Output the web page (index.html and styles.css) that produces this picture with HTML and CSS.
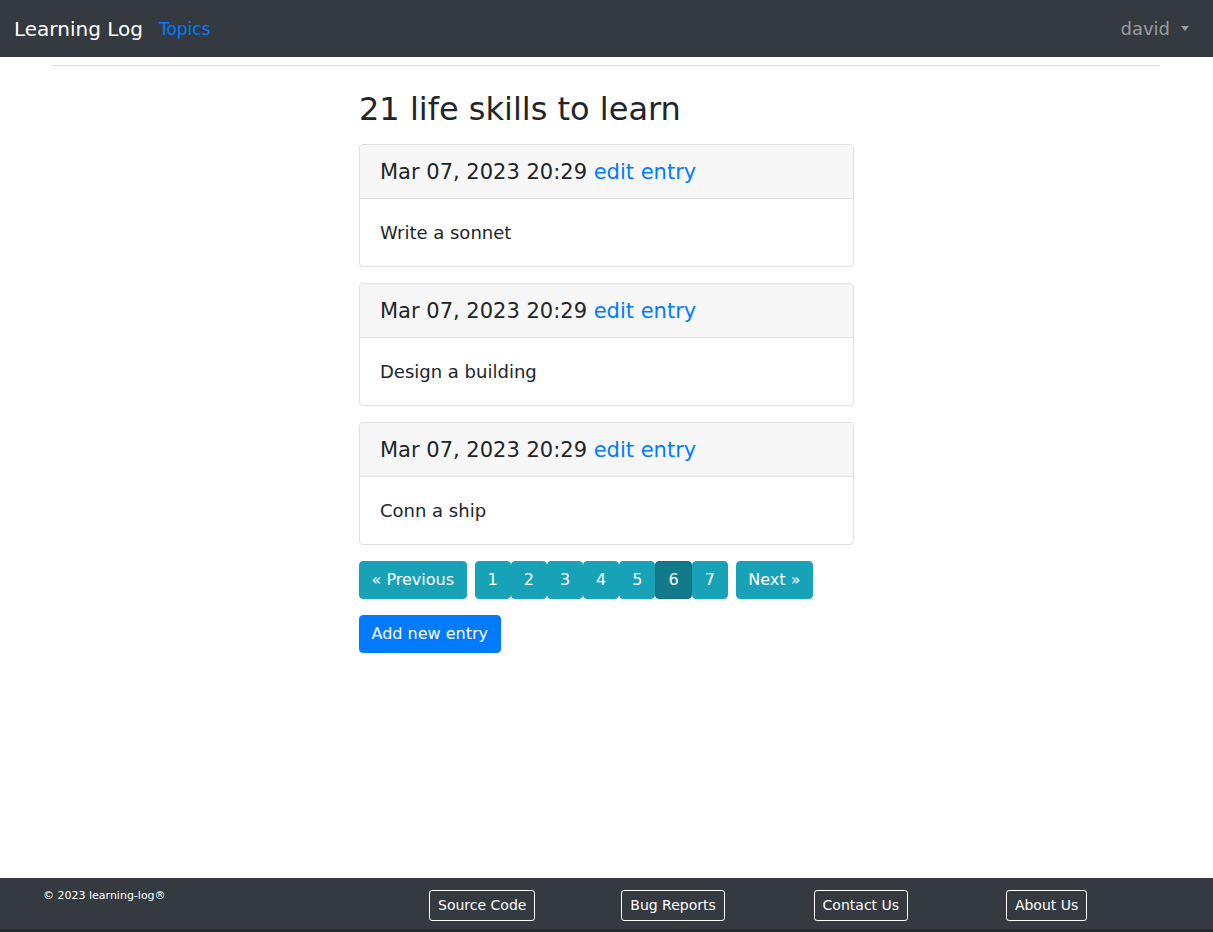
FILE: index.html
```html
<!DOCTYPE html>
<html lang="en">
<head>
<meta charset="utf-8">
<title>Learning Log</title>
<link rel="stylesheet" href="styles.css">
</head>
<body>
<div class="layout">
  <nav class="navbar">
    <div class="nav-left">
      <a class="brand" href="#">Learning Log</a>
      <a class="nav-link" href="#">Topics</a>
    </div>
    <a class="user" href="#">david<span class="caret"></span></a>
  </nav>
  <main class="main">
    <div class="rule"></div>
    <div class="column">
      <h2 class="title">21 life skills to learn</h2>
      <div class="card">
        <div class="card-header">Mar 07, 2023 20:29 <a href="#">edit entry</a></div>
        <div class="card-body">Write a sonnet</div>
      </div>
      <div class="card">
        <div class="card-header">Mar 07, 2023 20:29 <a href="#">edit entry</a></div>
        <div class="card-body">Design a building</div>
      </div>
      <div class="card">
        <div class="card-header">Mar 07, 2023 20:29 <a href="#">edit entry</a></div>
        <div class="card-body">Conn a ship</div>
      </div>
      <div class="pager">
        <a class="btn btn-info" href="#">« Previous</a>
        <div class="pages">
          <a class="btn btn-info pg" href="#">1</a>
          <a class="btn btn-info pg" href="#">2</a>
          <a class="btn btn-info pg" href="#">3</a>
          <a class="btn btn-info pg" href="#">4</a>
          <a class="btn btn-info pg" href="#">5</a>
          <a class="btn btn-info pg active" href="#">6</a>
          <a class="btn btn-info pg" href="#">7</a>
        </div>
        <a class="btn btn-info" href="#">Next »</a>
      </div>
      <div class="actions">
        <a class="btn btn-primary" href="#">Add new entry</a>
      </div>
    </div>
  </main>
  <footer class="footer">
    <div class="copy">© 2023 learning-log®</div>
    <div class="fcol"><a class="btn-outline" href="#">Source Code</a></div>
    <div class="fcol"><a class="btn-outline" href="#">Bug Reports</a></div>
    <div class="fcol"><a class="btn-outline" href="#">Contact Us</a></div>
    <div class="fcol"><a class="btn-outline" href="#">About Us</a></div>
  </footer>
</div>
</body>
</html>
```
FILE: styles.css
```css
* { box-sizing: border-box; }
html, body { margin: 0; padding: 0; }
body {
  font-family: "DejaVu Sans", sans-serif;
  color: #212529;
  background: #fff;
  font-size: 16px;
  line-height: 1.5;
}
a { text-decoration: none; }
.layout {
  height: 932px;
  display: flex;
  flex-direction: column;
}
.navbar {
  height: 57px;
  flex: none;
  background: #343a40;
  display: flex;
  align-items: center;
  justify-content: space-between;
  padding: 0 24px 0 14px;
}
.nav-left { display: flex; align-items: center; }
.brand {
  color: #fff;
  font-size: 20px;
  line-height: 30px;
  margin-right: 16px;
  white-space: nowrap;
}
.nav-link {
  color: #007bff;
  font-size: 17px;
  line-height: 30px;
  padding-top: 1px;
}
.user {
  color: rgba(255,255,255,.5);
  font-size: 18px;
  display: flex;
  align-items: center;
}
.caret {
  display: inline-block;
  margin-left: 11px;
  width: 0;
  height: 0;
  border-top: 5px solid rgba(255,255,255,.5);
  border-left: 4.5px solid transparent;
  border-right: 4.5px solid transparent;
}
.main { flex: 1; }
.rule {
  margin: 8px 53px 0 51px;
  height: 1px;
  background: #e1e1e1;
}
.column {
  margin-left: 359px;
  width: 495px;
}
.title {
  font-size: 32px;
  line-height: 1.2;
  margin: 24px 0 16px;
  font-weight: normal;
}
.card {
  border: 1px solid #dfdfdf;
  border-radius: 4px;
  margin-bottom: 16px;
  overflow: hidden;
}
.card-header {
  background: #f7f7f7;
  border-bottom: 1px solid #dfdfdf;
  font-size: 21px;
  line-height: 25px;
  padding: 15px 20px 13px 20px;
}
.card-header a { color: #007bff; }
.card-body {
  font-size: 18px;
  line-height: 27px;
  padding: 20px 20px 20px 20px;
}
.pager {
  display: flex;
  align-items: center;
  margin-top: 16px;
}
.pages {
  display: flex;
  margin: 0 8px 0 8px;
}
.btn {
  display: inline-block;
  font-size: 16px;
  line-height: 24px;
  padding: 6px 11.5px;
  border: 1px solid transparent;
  border-radius: 4px;
  color: #fff;
  text-align: center;
  white-space: nowrap;
}
.btn-info { background: #17a2b8; border-color: #17a2b8; }
.btn-info.active { background: #117a8b; border-color: #10707f; }
.pg { width: 36.2px; padding: 6px 0; }
.btn-primary { background: #007bff; border-color: #007bff; }
.actions { margin-top: 16px; }
.footer {
  background: #343a40;
  border-bottom: 3px solid #2a2c30;
  height: 54px;
  flex: none;
  display: grid;
  grid-template-columns: 385px repeat(4, 192.3px);
  padding: 12px 0 0 44px;
}
.copy {
  color: #fff;
  font-size: 11px;
  line-height: 15px;
  margin-top: -2px;
  margin-left: -1px;
}
.btn-outline {
  display: inline-block;
  color: #fff;
  font-size: 14px;
  line-height: 21px;
  padding: 4px 8px;
  border: 1px solid #fff;
  border-radius: 3px;
  white-space: nowrap;
}
```
